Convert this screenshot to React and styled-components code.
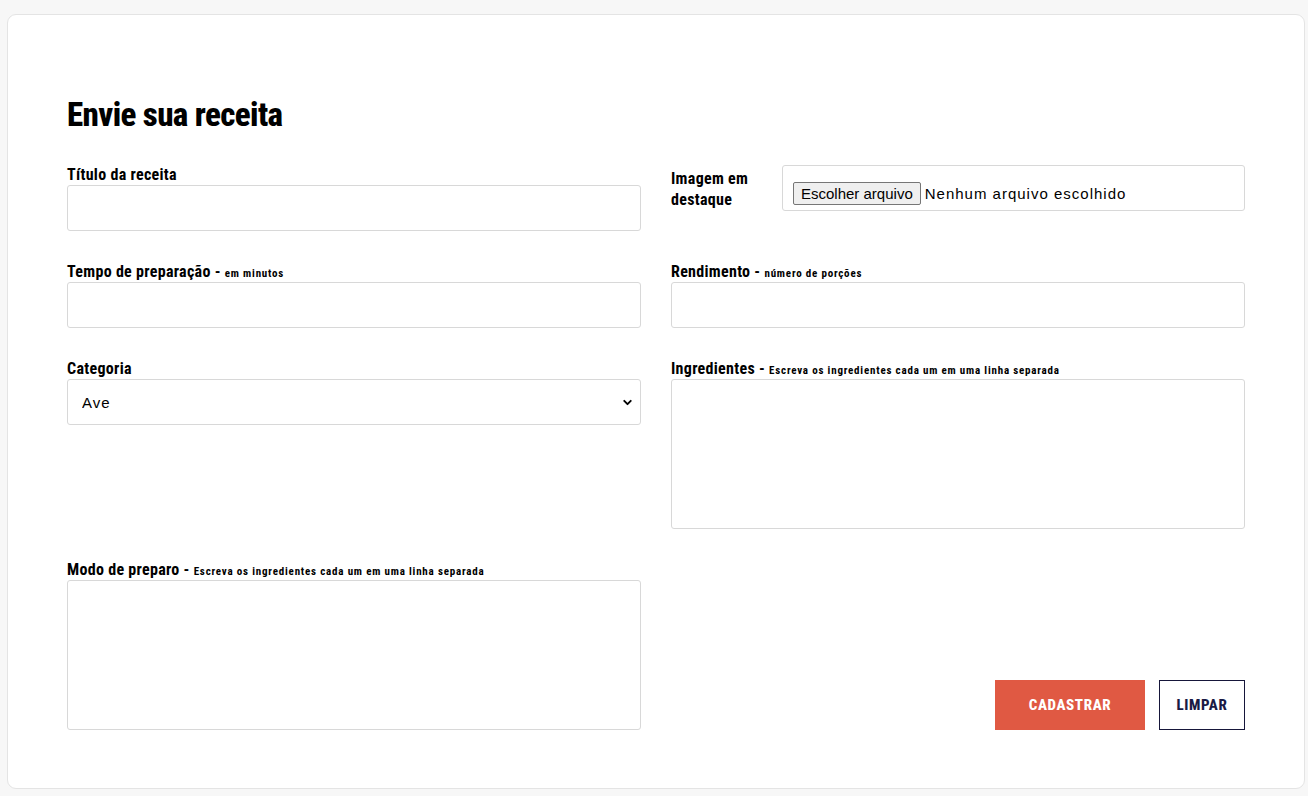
import styled, { createGlobalStyle } from "styled-components";
import { ChevronDown } from "lucide-react";

const GlobalStyle = createGlobalStyle`
  * {
    box-sizing: border-box;
  }

  body {
    margin: 0;
    background: #f7f7f7;
    font-family: "Liberation Sans", Arial, sans-serif;
  }
`;

const condensed = `"Roboto Condensed", Roboto, sans-serif`;

const Page = styled.div`
  padding: 14px 3px 7px 7px;
`;

const Card = styled.section`
  background: #fff;
  border: 1px solid #e4e4e4;
  border-radius: 9px;
  padding: 80px 59px 58px 59px;
`;

const Title = styled.h1`
  margin: 0 0 30px 0;
  font-family: ${condensed};
  font-weight: 800;
  font-size: 33px;
  line-height: 40px;
  letter-spacing: -0.6px;
  color: #000;
`;

const FormGrid = styled.form`
  display: grid;
  grid-template-columns: 1fr 1fr;
  column-gap: 30px;
  row-gap: 31px;
  align-items: start;
`;

const Field = styled.div`
  display: flex;
  flex-direction: column;
`;

const InlineField = styled.div`
  display: flex;
  align-items: center;
  gap: 15px;
`;

const Label = styled.label`
  display: block;
  font-family: ${condensed};
  font-weight: 700;
  font-size: 16px;
  line-height: ${(p) => (p.$wrap ? "21px" : "20px")};
  letter-spacing: 0.3px;
  color: #000;
  ${(p) => p.$wrap && "flex: 0 0 96px; padding-top: 2px;"}
`;

const Hint = styled.span`
  font-size: 11px;
  line-height: 1;
  letter-spacing: 0.8px;
`;

const Input = styled.input`
  width: 100%;
  height: 46px;
  border: 1px solid #d8d8d8;
  border-radius: 3px;
  padding: 0 14px;
  font-size: 15px;
  letter-spacing: 1px;
  font-family: "Liberation Sans", Arial, sans-serif;
  outline: none;
`;

const TextArea = styled.textarea`
  width: 100%;
  height: 150px;
  border: 1px solid #d8d8d8;
  border-radius: 3px;
  padding: 10px 14px;
  font-size: 15px;
  font-family: "Liberation Sans", Arial, sans-serif;
  resize: none;
  outline: none;
`;

const SelectWrap = styled.div`
  position: relative;

  svg {
    position: absolute;
    right: 7px;
    top: 17px;
    pointer-events: none;
    color: #000;
  }
`;

const Select = styled.select`
  appearance: none;
  width: 100%;
  height: 46px;
  border: 1px solid #d8d8d8;
  border-radius: 3px;
  padding: 0 14px;
  background: #fff;
  font-size: 15px;
  letter-spacing: 1px;
  font-family: "Liberation Sans", Arial, sans-serif;
  color: #000;
  outline: none;
`;

const FileBox = styled.label`
  flex: 1;
  height: 46px;
  display: flex;
  align-items: flex-end;
  gap: 4px;
  border: 1px solid #d8d8d8;
  border-radius: 3px;
  padding: 0 10px 5px 10px;
  cursor: pointer;

  input {
    display: none;
  }
`;

const FileButton = styled.span`
  display: inline-flex;
  align-items: center;
  height: 23px;
  padding: 0 7px;
  background: #efefef;
  border: 1px solid #767676;
  border-radius: 2px;
  font-size: 15px;
  color: #000;
`;

const FileName = styled.span`
  font-size: 15px;
  line-height: 23px;
  letter-spacing: 1px;
  color: #000;
`;

const Actions = styled.div`
  align-self: end;
  display: flex;
  justify-content: flex-end;
  gap: 14px;
`;

const Button = styled.button`
  height: 50px;
  width: ${(p) => (p.$primary ? "150px" : "86px")};
  border: 1px solid ${(p) => (p.$primary ? "#e05943" : "#16163a")};
  background: ${(p) => (p.$primary ? "#e05943" : "#fff")};
  color: ${(p) => (p.$primary ? "#fff" : "#1a1a45")};
  font-family: ${condensed};
  font-weight: 800;
  font-size: 15px;
  letter-spacing: 0.6px;
  cursor: pointer;
`;

export default function App() {
  return (
    <>
      <GlobalStyle />
      <Page>
        <Card>
          <Title>Envie sua receita</Title>
          <FormGrid onSubmit={(e) => e.preventDefault()}>
            <Field>
              <Label htmlFor="titulo">Título da receita</Label>
              <Input id="titulo" type="text" />
            </Field>

            <InlineField>
              <Label $wrap>Imagem em destaque</Label>
              <FileBox>
                <input type="file" />
                <FileButton>Escolher arquivo</FileButton>
                <FileName>Nenhum arquivo escolhido</FileName>
              </FileBox>
            </InlineField>

            <Field>
              <Label htmlFor="tempo">
                Tempo de preparação - <Hint>em minutos</Hint>
              </Label>
              <Input id="tempo" type="text" />
            </Field>

            <Field>
              <Label htmlFor="rendimento">
                Rendimento - <Hint>número de porções</Hint>
              </Label>
              <Input id="rendimento" type="text" />
            </Field>

            <Field>
              <Label htmlFor="categoria">Categoria</Label>
              <SelectWrap>
                <Select id="categoria" defaultValue="ave">
                  <option value="ave">Ave</option>
                  <option value="carne">Carne</option>
                  <option value="peixe">Peixe</option>
                  <option value="massa">Massa</option>
                </Select>
                <ChevronDown size={13} strokeWidth={3.5} />
              </SelectWrap>
            </Field>

            <Field>
              <Label htmlFor="ingredientes">
                Ingredientes - <Hint>Escreva os ingredientes cada um em uma linha separada</Hint>
              </Label>
              <TextArea id="ingredientes" />
            </Field>

            <Field>
              <Label htmlFor="modo">
                Modo de preparo - <Hint>Escreva os ingredientes cada um em uma linha separada</Hint>
              </Label>
              <TextArea id="modo" />
            </Field>

            <Actions>
              <Button type="submit" $primary>
                CADASTRAR
              </Button>
              <Button type="reset">LIMPAR</Button>
            </Actions>
          </FormGrid>
        </Card>
      </Page>
    </>
  );
}
